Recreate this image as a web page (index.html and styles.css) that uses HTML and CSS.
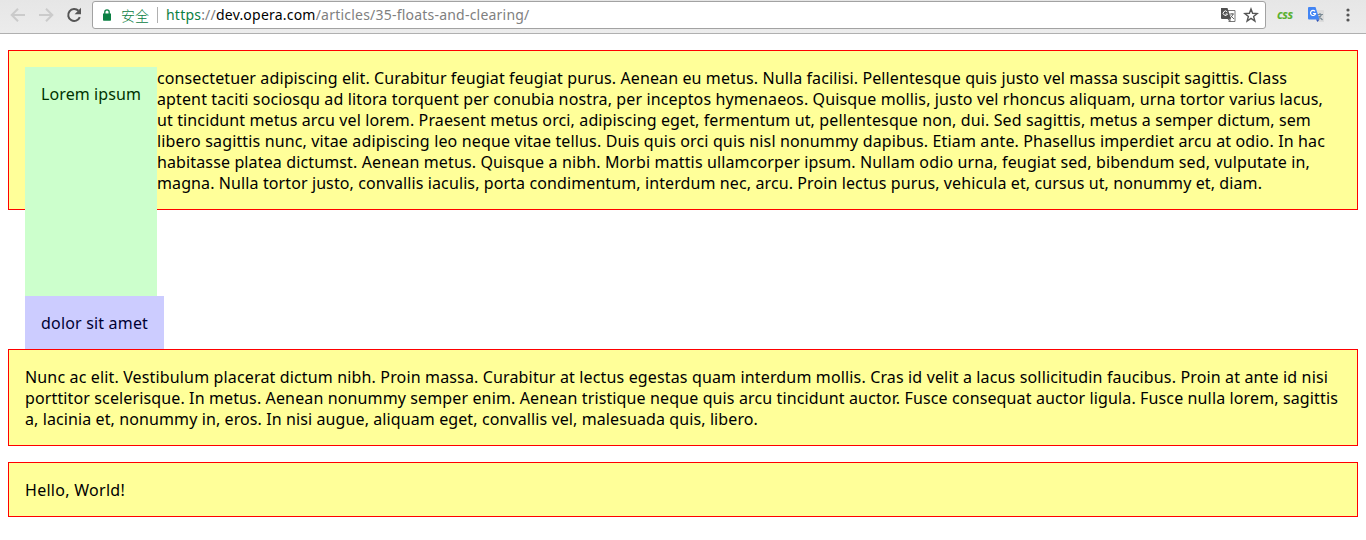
FILE: index.html
```html
<!DOCTYPE html>
<html lang="en">
<head>
<meta charset="utf-8">
<title>Floats and clearing</title>
<link rel="stylesheet" href="styles.css">
</head>
<body>
<header class="toolbar">
  <svg class="nav-icon" width="16" height="16" viewBox="0 0 16 16"><path d="M15 8H2M8 1.700L1.700 8 8 14.300" fill="none" stroke="#cbcbcb" stroke-width="2"/></svg>
  <svg class="nav-icon" width="16" height="16" viewBox="0 0 16 16"><path d="M1 8h13M8 1.700L14.300 8 8 14.300" fill="none" stroke="#cbcbcb" stroke-width="2"/></svg>
  <svg class="nav-icon" width="16" height="16" viewBox="0 0 16 16"><path d="M13.800 10.200A6 6 0 1 1 12.500 3.800" fill="none" stroke="#555" stroke-width="2"/><path d="M15 .8v6.400H8.600z" fill="#555"/></svg>
  <div class="address">
    <svg class="lock" width="8" height="12" viewBox="0 0 8 12"><path d="M0 4.500h8V11q0 .7-.7.7H.7Q0 11.700 0 11z" fill="#0b8043"/><path d="M1.800 5V3a2.200 2.200 0 0 1 4.400 0v2" fill="none" stroke="#0b8043" stroke-width="1.300"/></svg>
    <span class="secure">安全</span>
    <span class="divider"></span>
    <span class="url"><span class="scheme">https</span>://<span class="host">dev.opera.com</span>/articles/35-floats-and-clearing/</span>
    <svg class="translate" width="15" height="14" viewBox="0 0 15 14"><path d="M6 2.500h8v11H7.500" fill="#fff" stroke="#777"/><path d="M0 0h6.500l3.500 11H1Q0 11 0 10z" fill="#505050"/><path d="M6.300 4A2.200 2.200 0 1 0 6.500 6H4.600" fill="none" stroke="#fff"/><path d="M8.500 6h4.500M11 5v1M12 6q-.5 2.500-3 4M9.500 7.500l3.500 3.500M7 11l2 2.500V11z" fill="none" stroke="#666"/></svg>
    <svg class="star" width="16" height="16" viewBox="0 0 16 16"><path d="M8 2l1.600 4.300 4.600.2-3.600 2.900 1.300 4.600L8 11.400 4.100 14l1.300-4.600-3.600-2.900 4.600-.2z" fill="none" stroke="#555" stroke-width="1.400"/></svg>
  </div>
  <span class="css-badge">css</span>
  <svg class="gtranslate" width="16" height="16" viewBox="0 0 16 16"><path d="M6 3h9q1 0 1 1v11H9z" fill="#dcdcdc"/><path d="M9 7.500h6M12 6v1.500M13.500 7.500q-1 3-4 4.500M10.500 9l4 4" fill="none" stroke="#7b8b95" stroke-width="1.200"/><path d="M1 0h6.500l4 12.500H1q-1 0-1-1V1q0-1 1-1z" fill="#4285f4"/><path d="M8 12.500h3.500L9.500 15z" fill="#3055bb"/><path d="M7 4.400A2.500 2.500 0 1 0 7.500 6.500H5" fill="none" stroke="#fff" stroke-width="1.200"/></svg>
  <svg class="menu" width="4" height="14" viewBox="0 0 4 14" fill="#555"><circle cx="2" cy="2" r="1.600"/><circle cx="2" cy="7" r="1.600"/><circle cx="2" cy="12" r="1.600"/></svg>
</header>
<main class="page">
  <div class="para first"><span class="float-one">Lorem ipsum</span><span class="float-two">dolor sit amet</span><span class="l1">consectetuer adipiscing elit. Curabitur feugiat feugiat purus. Aenean eu metus. Nulla facilisi. Pellentesque quis justo vel massa suscipit sagittis. Class</span><br>
  <span class="l2">aptent taciti sociosqu ad litora torquent per conubia nostra, per inceptos hymenaeos. Quisque mollis, justo vel rhoncus aliquam, urna tortor varius lacus,</span><br>
  <span class="l3">ut tincidunt metus arcu vel lorem. Praesent metus orci, adipiscing eget, fermentum ut, pellentesque non, dui. Sed sagittis, metus a semper dictum, sem</span><br>
  <span class="l4">libero sagittis nunc, vitae adipiscing leo neque vitae tellus. Duis quis orci quis nisl nonummy dapibus. Etiam ante. Phasellus imperdiet arcu at odio. In hac</span><br>
  <span class="l5">habitasse platea dictumst. Aenean metus. Quisque a nibh. Morbi mattis ullamcorper ipsum. Nullam odio urna, feugiat sed, bibendum sed, vulputate in,</span><br>
  <span class="l6">magna. Nulla tortor justo, convallis iaculis, porta condimentum, interdum nec, arcu. Proin lectus purus, vehicula et, cursus ut, nonummy et, diam.</span></div>
  <div class="para"><span class="l7">Nunc ac elit. Vestibulum placerat dictum nibh. Proin massa. Curabitur at lectus egestas quam interdum mollis. Cras id velit a lacus sollicitudin faucibus. Proin at ante id nisi</span><br>
  <span class="l8">porttitor scelerisque. In metus. Aenean nonummy semper enim. Aenean tristique neque quis arcu tincidunt auctor. Fusce consequat auctor ligula. Fusce nulla lorem, sagittis</span><br>
  <span class="l9">a, lacinia et, nonummy in, eros. In nisi augue, aliquam eget, convallis vel, malesuada quis, libero.</span></div>
  <div class="para"><span class="l10">Hello, World!</span></div>
</main>
</body>
</html>
```
FILE: styles.css
```css
body { margin: 0; background: #fff; color: #000; font: 16px/21px "Noto Sans", "Noto Sans CJK SC", sans-serif; }
.toolbar { box-sizing: border-box; height: 34px; display: flex; align-items: center; padding: 0 11px 3px 10px; background: linear-gradient(#e6e6e6, #ececec); border-bottom: 1px solid #b0b0b0; }
.nav-icon { flex: none; margin-right: 12px; }
.address { box-sizing: border-box; flex: none; width: 1174px; height: 28px; margin-left: -2px; display: flex; align-items: center; padding: 0 6px 0 10px; background: #fff; border: 1px solid #a2a2a2; border-radius: 3px; font-size: 14px; }
.lock { margin-right: 10px; }
.secure { color: #0b8043; font-family: "Noto Sans CJK SC", sans-serif; font-weight: 300; line-height: 20px; padding-bottom: 1px; }
.divider { width: 1px; height: 16px; margin: 0 8px; background: #b0b0b0; }
.url { flex: 1; color: #808080; white-space: nowrap; letter-spacing: .215px; padding-bottom: 1px; }
.scheme { color: #0b8043; }
.host { color: #000; }
.translate { margin-right: 7px; }
.css-badge { margin-left: 11px; width: 31px; color: #5ab031; font: italic bold 12px/16px "Open Sans", sans-serif; letter-spacing: -.5px; padding-bottom: 1px; }
.gtranslate { margin-right: 22px; }
.page { padding: 16px 8px; }
.para { margin-bottom: 16px; padding: 17px 16px 15px; background: #ff9; border: 1px solid #f00; white-space: nowrap; }
.first { height: 126px; margin-bottom: 139px; }
.float-one { float: left; margin-top: -1px; padding: 17px 16px 16px; height: 196px; width: 100px; background: #cfc; color: #030; letter-spacing: .1px; }
.float-two { float: left; clear: left; padding: 17px 16px 15px; width: 107px; background: #ccf; color: #003; letter-spacing: .18px; }
.l1 { letter-spacing: .114px; }
.l2 { letter-spacing: .127px; }
.l3 { letter-spacing: .12px; }
.l4 { letter-spacing: .142px; }
.l5 { letter-spacing: .13px; }
.l6 { letter-spacing: .104px; }
.l7 { letter-spacing: .149px; }
.l8 { letter-spacing: .128px; }
.l9 { letter-spacing: .102px; }
.l10 { letter-spacing: .278px; }
```
